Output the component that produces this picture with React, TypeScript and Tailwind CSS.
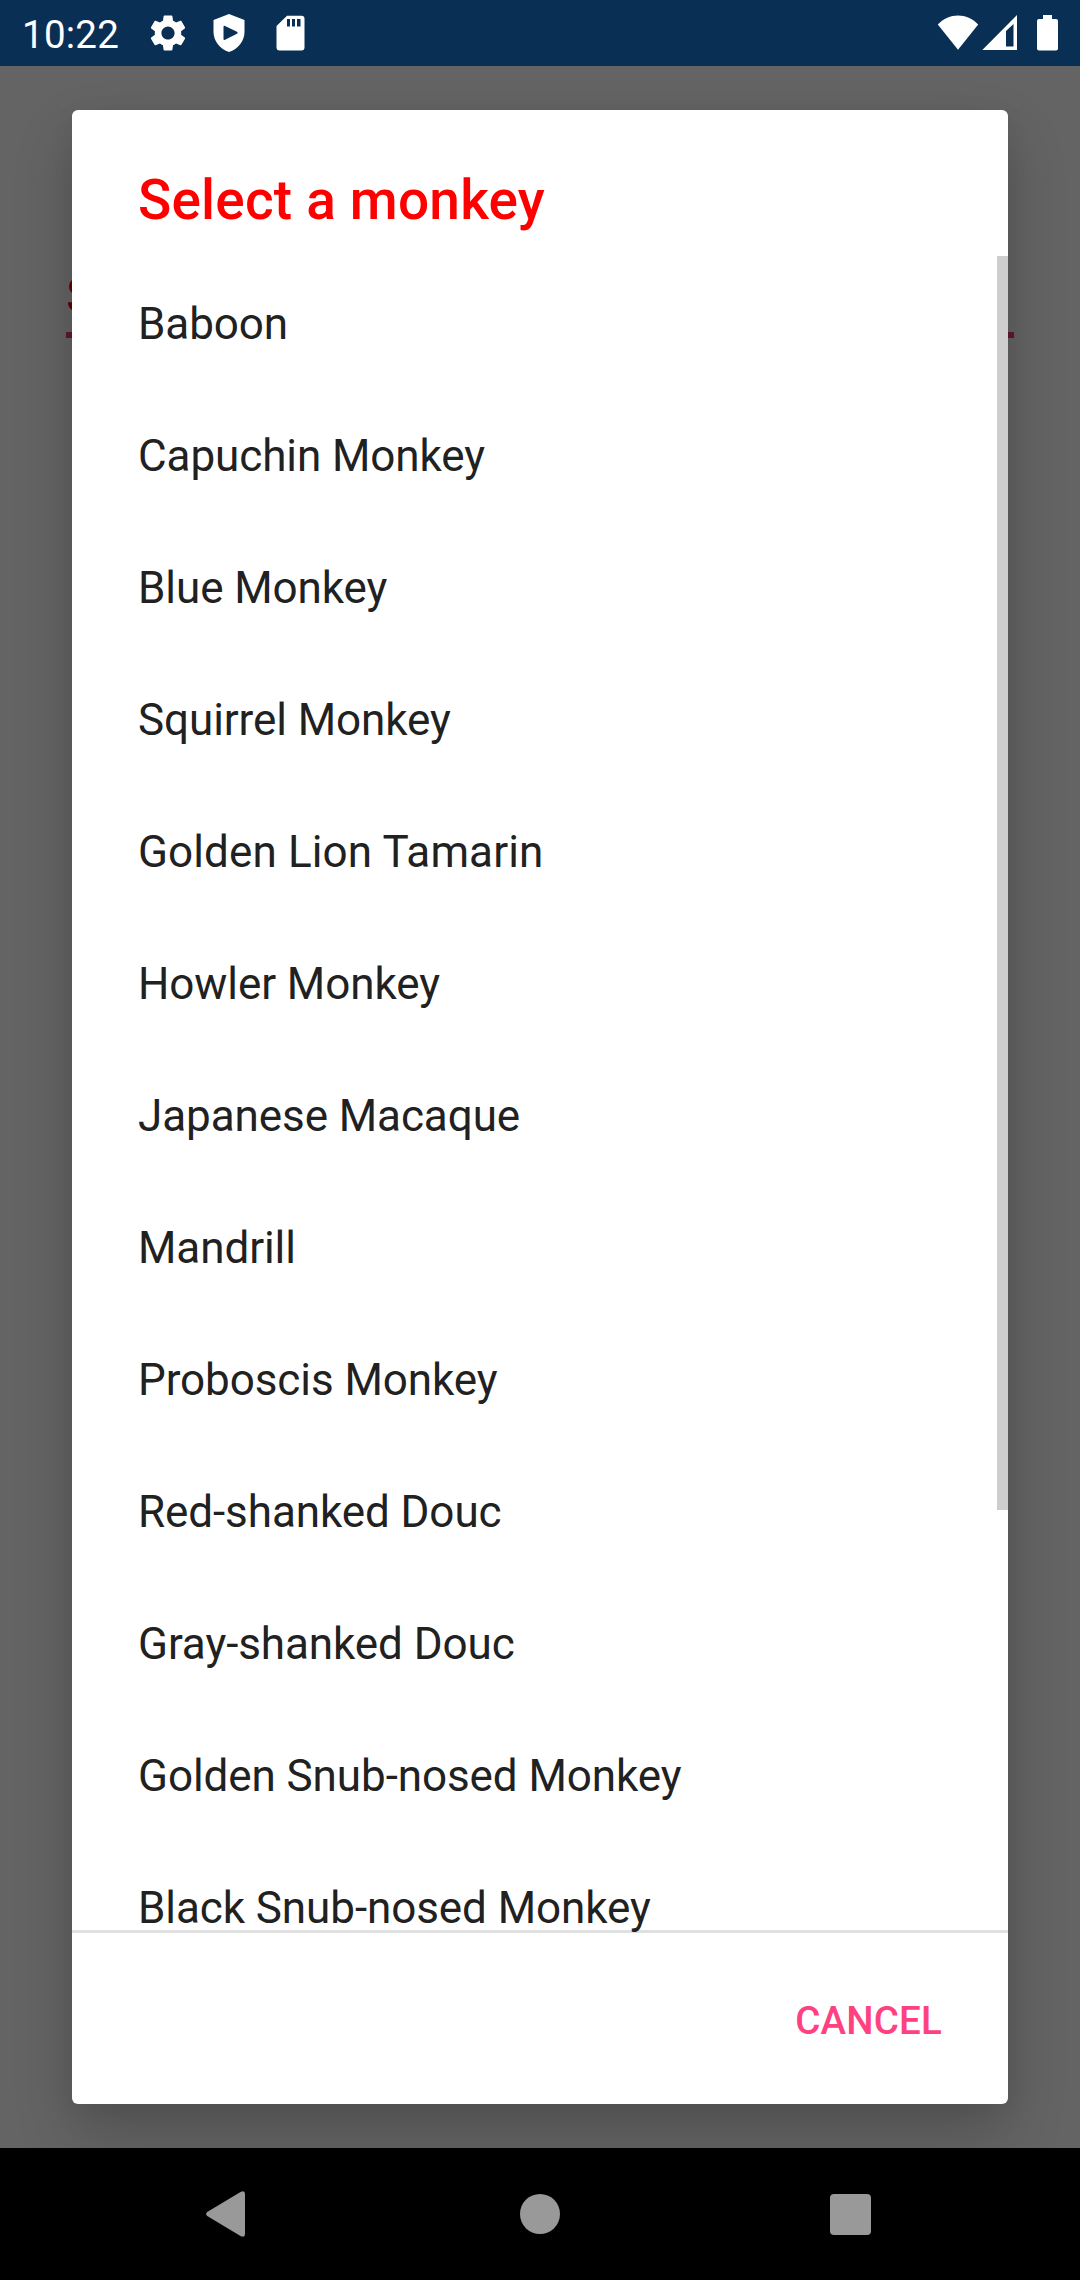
const monkeys = [
  "Baboon",
  "Capuchin Monkey",
  "Blue Monkey",
  "Squirrel Monkey",
  "Golden Lion Tamarin",
  "Howler Monkey",
  "Japanese Macaque",
  "Mandrill",
  "Proboscis Monkey",
  "Red-shanked Douc",
  "Gray-shanked Douc",
  "Golden Snub-nosed Monkey",
  "Black Snub-nosed Monkey",
];

function StatusBar() {
  return (
    <header className="flex h-[66px] shrink-0 items-center bg-[#0a2f54] text-white">
      <span className="ml-[22px] w-[124px] pt-[4px] text-[38.5px] leading-none tracking-[0.25px]">10:22</span>
      <svg className="size-[44px]" viewBox="0 0 24 24" fill="currentColor">
        <path d="M19.14 12.94c.04-.3.06-.61.06-.94 0-.32-.02-.64-.07-.94l2.03-1.58c.18-.14.23-.41.12-.61l-1.92-3.32c-.12-.22-.37-.29-.59-.22l-2.39.96c-.5-.38-1.03-.7-1.62-.94l-.36-2.54c-.04-.24-.24-.41-.48-.41h-3.84c-.24 0-.43.17-.47.41l-.36 2.54c-.59.24-1.13.57-1.62.94l-2.39-.96c-.22-.08-.47 0-.59.22L2.74 8.87c-.12.21-.08.47.12.61l2.03 1.58c-.05.3-.09.63-.09.94s.02.64.07.94l-2.03 1.58c-.18.14-.23.41-.12.61l1.92 3.32c.12.22.37.29.59.22l2.39-.96c.5.38 1.03.7 1.62.94l.36 2.54c.05.24.24.41.48.41h3.84c.24 0 .44-.17.47-.41l.36-2.54c.59-.24 1.13-.56 1.62-.94l2.39.96c.22.08.47 0 .59-.22l1.92-3.32c.12-.22.07-.47-.12-.61l-2.01-1.58zM12 15.600c-1.980 0-3.600-1.620-3.600-3.600s1.620-3.600 3.600-3.600 3.600 1.620 3.600 3.600-1.620 3.600-3.600 3.600z" />
      </svg>
      <svg className="ml-[23px] h-[38px] w-[32px]" viewBox="0 0 32 38" fill="currentColor" fillRule="evenodd">
        <path d="M16 0 31.500 6V18C31.500 27 25 35 16 38 7 35 .5 27 .5 18V6ZM10.500 13V25Q10.500 26.500 12 25.800L24 19.800Q25.500 18.800 24 17.800L12 12Q10.500 11.300 10.500 13Z" />
      </svg>
      <svg className="ml-[31px] h-[36px] w-[29px]" viewBox="0 0 29 36" fill="currentColor" fillRule="evenodd">
        <path d="M11 .8H25.500Q28.500 .8 28.500 3.800V32.500Q28.500 35.500 25.500 35.500H3.500Q.5 35.500 .5 32.500V11ZM11 4V11.500H14V4ZM16 4V11.500H19V4ZM21 4V11.500H24.500V4Z" />
      </svg>
      <svg className="ml-auto h-[36px] w-[42px]" viewBox="0 0 42 36" fill="currentColor">
        <path d="M.8 9.500C12-2.500 30-2.500 41.200 9.500L21 34.700Z" />
      </svg>
      <svg className="ml-[3px] h-[36px] w-[35px]" viewBox="0 0 35 36" fill="currentColor" fillRule="evenodd">
        <path d="M.3 35 35 0V35ZM24 16V31.500H31.500V9Z" />
      </svg>
      <svg className="mr-[22px] ml-[20px] h-[36px] w-[21px]" viewBox="0 0 21 36" fill="currentColor">
        <path d="M6 0H15V4H19Q21 4 21 6V33.500Q21 35.500 19 35.500H2Q0 35.500 0 33.500V6Q0 4 2 4H6Z" />
      </svg>
    </header>
  );
}

function NavigationBar() {
  return (
    <nav className="flex h-[132px] shrink-0 items-center bg-black text-[#999999]">
      <svg className="ml-[206px] h-[46px] w-[39px]" viewBox="0 0 39 46" fill="currentColor">
        <path d="M1.200 21 34.500 1Q39-1.200 39 3V43Q39 47 34.500 45L1.200 25Q-1 23 1.200 21Z" />
      </svg>
      <span className="ml-[275px] size-[40px] rounded-full bg-[#999999]" />
      <span className="ml-[270px] size-[41px] rounded-[4px] bg-[#999999]" />
    </nav>
  );
}

export default function App() {
  return (
    <div className="relative flex h-[2280px] w-[1080px] flex-col overflow-hidden bg-[#646464] font-['Roboto',sans-serif]">
      <StatusBar />
      <main className="relative flex-1 overflow-hidden px-[72px] pt-[44px] pb-[44px]">
        <div className="absolute top-[196px] left-[66px] h-[76px] w-[948px] border-b-[6px] border-[#611833] pt-[5px] text-[49.5px] leading-[58px] text-[#660000]">
          Select a monkey
        </div>
        <section
          role="dialog"
          className="relative flex h-full flex-col overflow-hidden rounded-[6px] bg-white shadow-[0_28px_60px_rgba(0,0,0,0.20),0_4px_24px_rgba(0,0,0,0.05)]"
        >
          <h1 className="h-[146px] shrink-0 px-[66px] pt-[58px] text-[55px] leading-[65px] font-medium tracking-[0.18px] text-[#ff0000]">
            Select a monkey
          </h1>
          <ul className="relative z-10 -mb-[3px] min-h-0 flex-1 overflow-hidden text-[44px] tracking-[-0.08px] text-[#212121]">
            {monkeys.map((name) => (
              <li
                key={name}
                className={
                  name === "Golden Lion Tamarin"
                    ? "flex h-[132px] items-center px-[66px] pt-[4px] tracking-[0.12px]"
                    : "flex h-[132px] items-center px-[66px] pt-[4px]"
                }
              >
                {name}
              </li>
            ))}
            <li aria-hidden="true" className="absolute top-0 right-0 h-[1254px] w-[11px] bg-[#cecece]" />
          </ul>
          <footer className="flex h-[174px] shrink-0 items-center justify-end border-t-[3px] border-[#e0e0e0] pt-[4px] pr-[66px]">
            <button className="text-[38.5px] font-medium tracking-[0.2px] text-[#ff4081]">CANCEL</button>
          </footer>
        </section>
      </main>
      <NavigationBar />
    </div>
  );
}
